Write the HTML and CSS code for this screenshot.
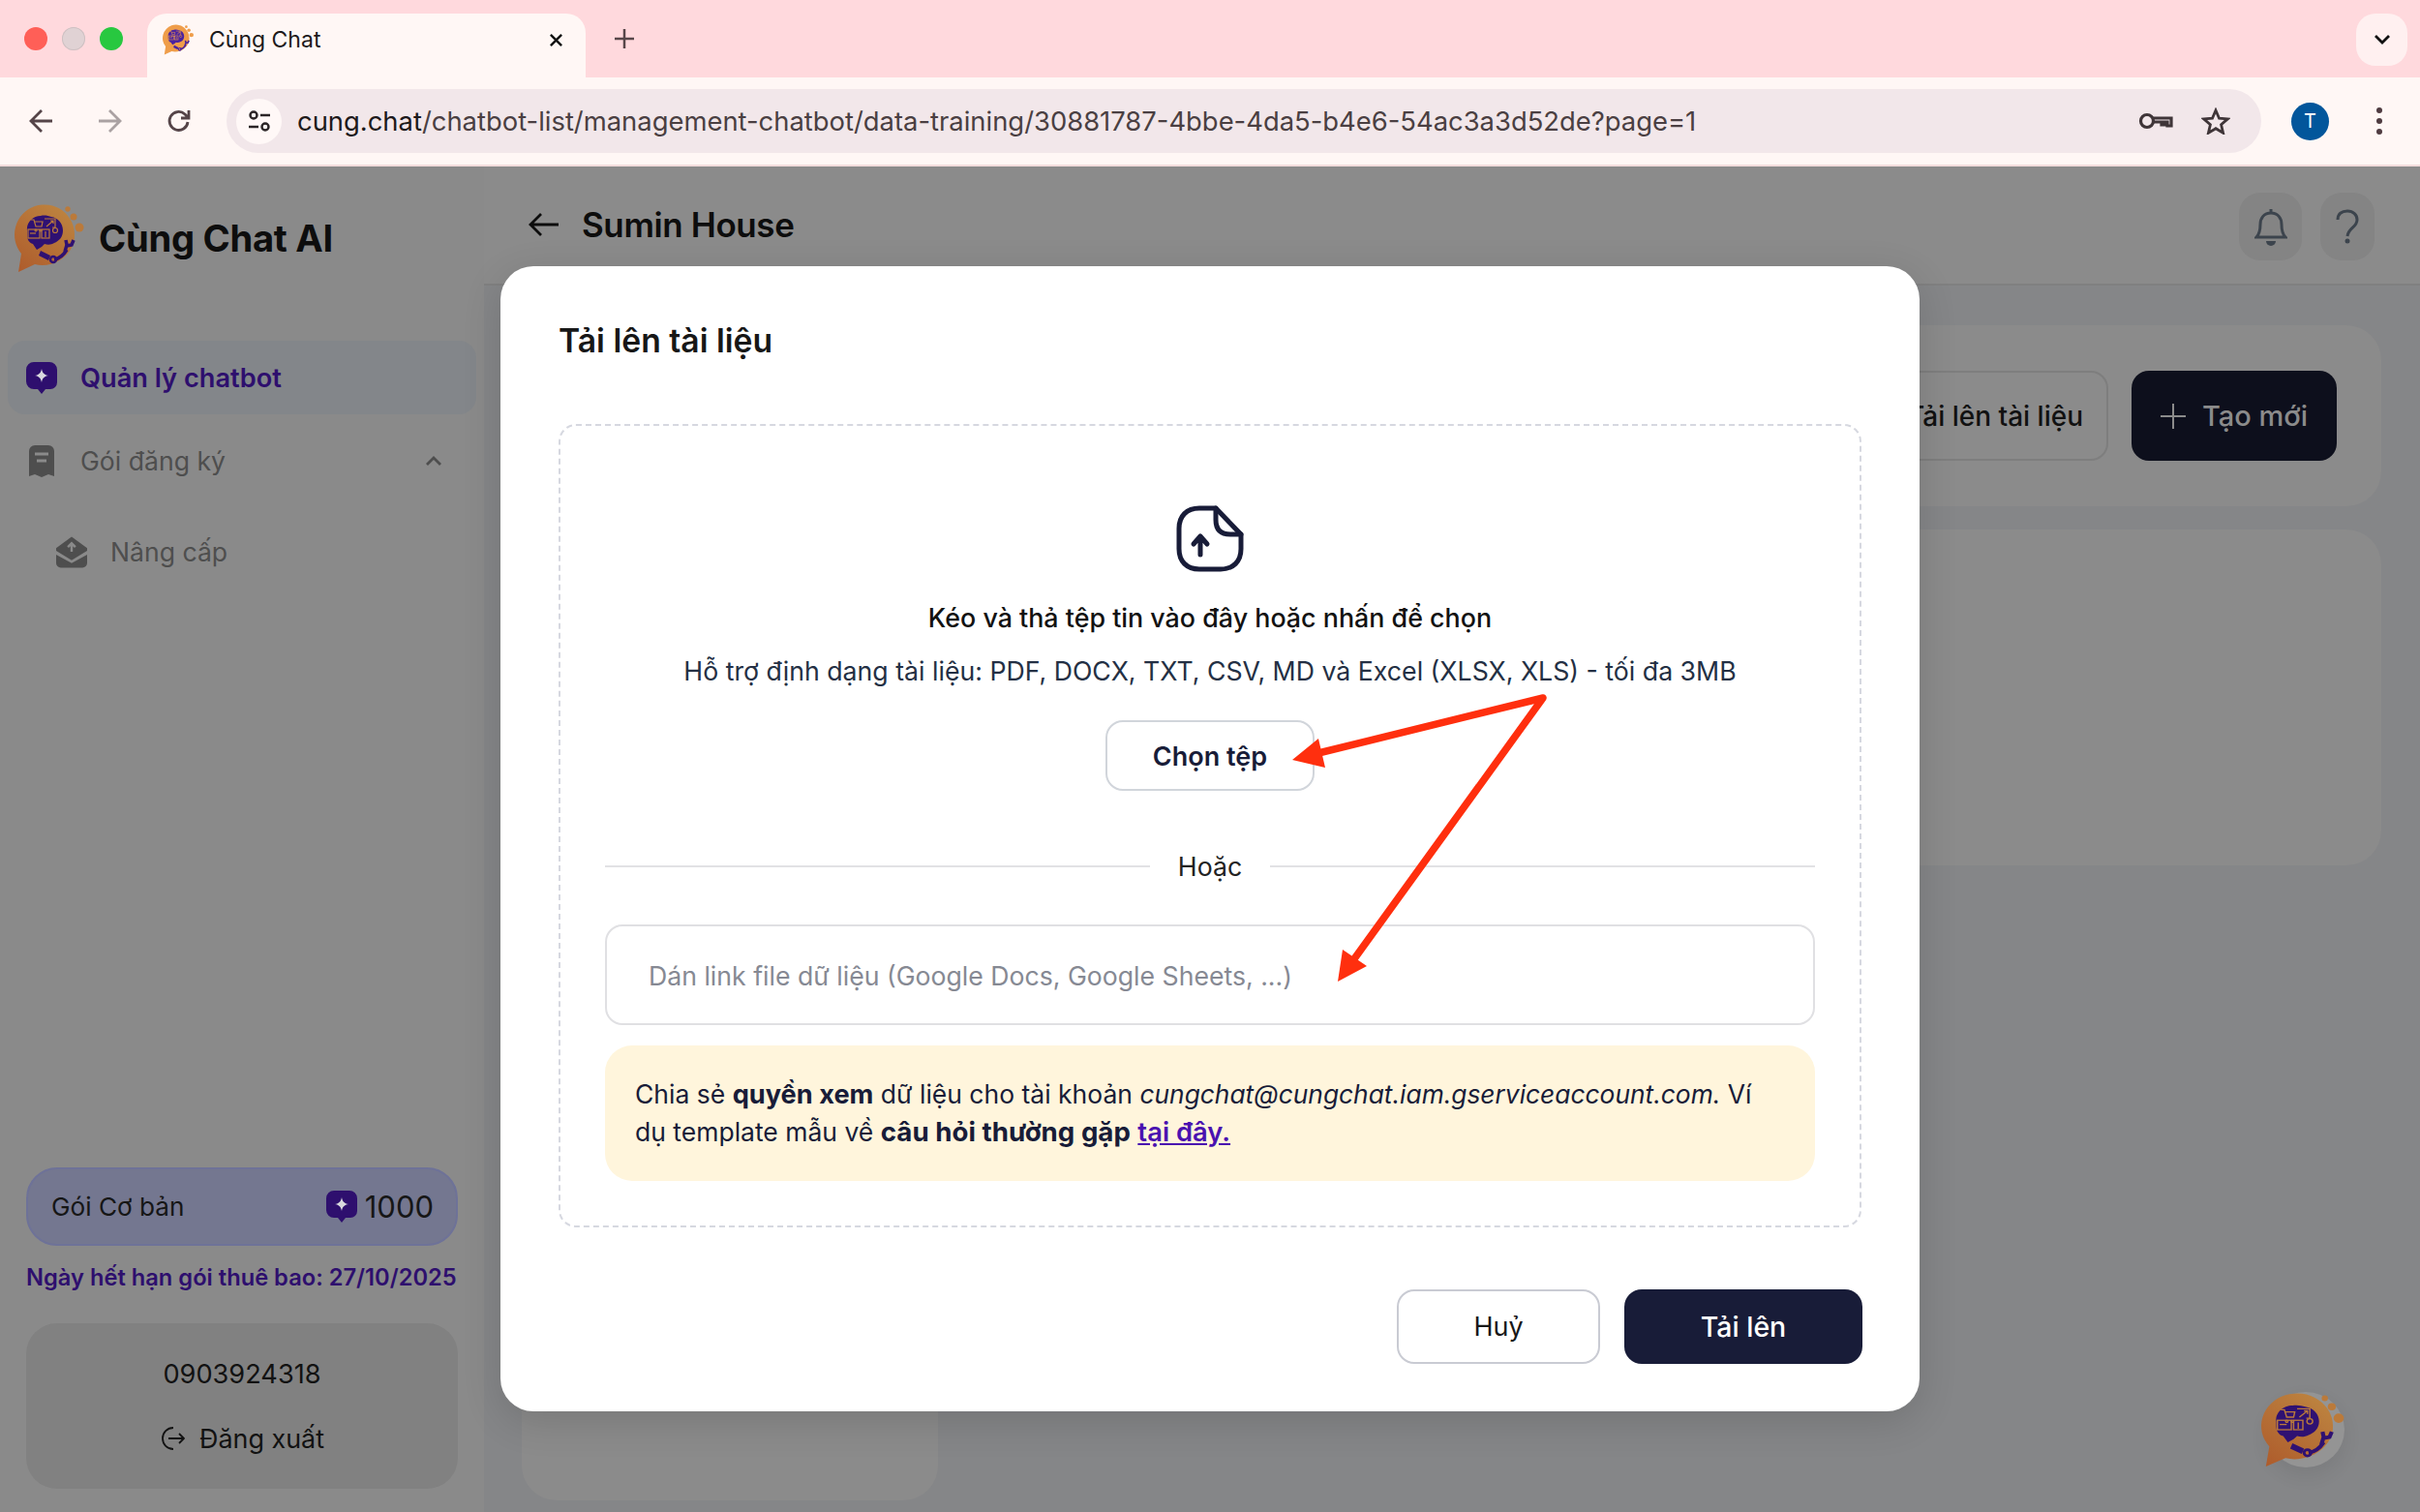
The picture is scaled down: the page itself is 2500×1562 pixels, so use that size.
FILE: index.html
```html
<!DOCTYPE html>
<html lang="vi">
<head>
    <meta charset="UTF-8">
    <meta name="viewport" content="width=device-width, initial-scale=1.0">
    <title>Cùng Chat</title>
    <link rel="stylesheet" href="styles.css">
</head>
<body>
    <svg class="defs" width="0" height="0">
        <defs>
            <linearGradient id="bubbleDim" x1="0.8" y1="0" x2="0.1" y2="1">
                <stop offset="0" stop-color="#bd8440"/>
                <stop offset="1" stop-color="#ae5c2c"/>
            </linearGradient>
            <symbol id="logoMark" viewBox="0 0 72 72">
                <path fill="currentColor" d="M13 28c-1-8 6-15 14-15 4-1 8 0 11 1 7 1 12 7 12 14 0 7-4 11-9 13-3 2-7 2-10 1l-3 3-5 3-4-6c-4-1-6-5-6-9z"/>
                <g fill="none" stroke="var(--mark-line)" stroke-width="1.2">
                    <path d="M17 17h3l2 7h6l1-5h-8M22 27a1 1 0 1 0 .1 0M27 27a1 1 0 1 0 .1 0"/>
                    <path d="M31 16h11v9h-3M33 24l7-6M37 18h3v3"/>
                    <circle cx="42" cy="28" r="2.5"/>
                    <rect x="14" y="27" width="12" height="9"/>
                    <path d="M16 31h6"/>
                    <rect x="28" y="27" width="8" height="9"/>
                    <path d="M32 29v6"/>
                </g>
                <path fill="currentColor" d="M27 49l10 5-2 5-10-5z"/>
                <g fill="none" stroke="currentColor">
                    <path stroke-width="3.500" d="M41 58c6-1 10-5 13-10"/>
                    <path stroke-width="3.500" d="M52 50l2-7-1-5M54 44l5-1 2-5"/>
                    <circle cx="40" cy="58" r="3" stroke-width="2.500"/>
                </g>
            </symbol>
            <symbol id="sparkChat" viewBox="0 0 32 33">
                <path fill="currentColor" d="M8 0h16a8 8 0 0 1 8 8v13a7 7 0 0 1-7 7h-5l-4 5-4-5H8a8 8 0 0 1-8-8V8a8 8 0 0 1 8-8z"/>
                <path fill="#d9d9de" d="M16 7c.8 4.300 2.700 6.200 7 7-4.300.8-6.200 2.700-7 7-.8-4.300-2.700-6.200-7-7 4.300-.8 6.200-2.700 7-7z"/>
            </symbol>
        </defs>
    </svg>

    <div class="chrome">
        <div class="tabstrip">
            <div class="lights">
                <span class="light red"></span>
                <span class="light grey"></span>
                <span class="light green"></span>
            </div>
            <div class="tab">
                <svg class="favicon" viewBox="0 0 72 72">
                    <path fill="#ef9d4a" d="M62 33a31 31 0 1 0-55 19l-3 19 17-8c17 5 41-8 41-30z"/>
                    <circle cx="55" cy="6" r="3" fill="#ef9d4a"/><circle cx="61" cy="14" r="4" fill="#ef9d4a"/><circle cx="67" cy="25" r="5" fill="#ef9d4a"/>
                    <use href="#logoMark" class="mark-bright" width="72" height="72"/>
                </svg>
                <span class="tab-title">Cùng Chat</span>
                <svg class="tab-close" viewBox="0 0 16 16"><path d="M2 2l12 12M14 2L2 14"/></svg>
            </div>
            <svg class="new-tab" viewBox="0 0 20 20"><path d="M10 0v20M0 10h20"/></svg>
            <div class="tab-search">
                <svg viewBox="0 0 16 10"><path d="M1 1l7 7 7-7"/></svg>
            </div>
        </div>
        <div class="toolbar">
            <div class="nav-icons">
                <svg viewBox="0 0 26 26"><path d="M24 13H3M13 2L2 13l11 11"/></svg>
                <svg class="off" viewBox="0 0 26 26"><path d="M2 13h21M13 2l11 11-11 11"/></svg>
                <svg viewBox="0 0 26 26"><path d="M22 14a9.500 9.500 0 1 1-3-8l3 3M23 2v8h-8"/></svg>
            </div>
            <div class="omnibox">
                <span class="site-info">
                    <svg viewBox="0 0 24 24">
                        <circle cx="6" cy="6" r="3.500"/><path d="M13 6h10M1 18h10"/><circle cx="18" cy="18" r="3.500"/>
                    </svg>
                </span>
                <span class="url"><b>cung.chat</b>/chatbot-list/management-chatbot/data-training/30881787-4bbe-4da5-b4e6-54ac3a3d52de?page=1</span>
                <svg class="key" viewBox="0 0 36 20">
                    <circle cx="9" cy="10" r="6.500"/><path d="M15 7h19v8h-4v-4h-3v3h-3v-3h-9"/>
                </svg>
                <svg class="star" viewBox="0 0 30 28">
                    <path d="M15 3l3.500 8.200 8.800.7-6.700 5.800 2 8.600-7.600-4.600-7.600 4.600 2-8.600-6.700-5.800 8.800-.7z"/>
                </svg>
            </div>
            <span class="avatar">T</span>
            <span class="kebab"><i></i><i></i><i></i></span>
        </div>
    </div>

    <div class="app">
        <aside class="sidebar">
            <div class="brand">
                <svg class="brand-logo" viewBox="0 0 72 72">
                    <path fill="url(#bubbleDim)" d="M62 33a31 31 0 1 0-55 19l-3 19 17-8c17 5 41-8 41-30z"/>
                    <circle cx="55" cy="6" r="2.700" fill="#bb7a3a"/><circle cx="61" cy="14" r="3.500" fill="#bb7a3a"/><circle cx="67" cy="25" r="4.500" fill="#bb7a3a"/>
                    <use href="#logoMark" class="mark-dim" width="72" height="72"/>
                </svg>
                <span class="brand-name">Cùng Chat AI</span>
            </div>
            <nav class="menu">
                <a class="menu-item active">
                    <svg class="menu-icon"><use href="#sparkChat"/></svg>
                    Quản lý chatbot
                </a>
                <a class="menu-item">
                    <svg class="menu-icon" viewBox="0 0 32 33">
                        <path fill="currentColor" d="M9 0h14a6 6 0 0 1 6 6v26l-6-2-7 3-7-3-6 2V6a6 6 0 0 1 6-6z"/>
                        <path stroke="#8a8a8a" stroke-width="3" d="M9 9h14M11 16h10"/>
                    </svg>
                    Gói đăng ký
                    <svg class="chevron" viewBox="0 0 16 10"><path d="M1 9l7-7 7 7"/></svg>
                </a>
                <a class="menu-item sub">
                    <svg class="menu-icon" viewBox="0 0 33 33">
                        <path fill="currentColor" d="M16.500 0L33 12v3L16.500 25 0 15v-3z"/>
                        <path fill="currentColor" d="M0 19l16.500 9L33 19v9a5 5 0 0 1-5 5H5a5 5 0 0 1-5-5z"/>
                        <path fill="none" stroke="#8a8a8a" stroke-width="2.500" d="M16.500 16V7M12.500 11l4-4 4 4"/>
                    </svg>
                    Nâng cấp
                </a>
            </nav>
            <div class="plan">
                <span>Gói Cơ bản</span>
                <span class="plan-credit">
                    <svg class="credit-icon"><use href="#sparkChat"/></svg>
                    1000
                </span>
            </div>
            <p class="expiry">Ngày hết hạn gói thuê bao: 27/10/2025</p>
            <div class="user-box">
                <span class="phone">0903924318</span>
                <span class="logout">
                    <svg viewBox="0 0 26 26"><path d="M14 2a11 11 0 1 0 0 22M9 13h16M20 8l5 5-5 5"/></svg>
                    Đăng xuất
                </span>
            </div>
        </aside>

        <main class="main">
            <header class="topbar">
                <svg class="back" viewBox="0 0 32 26"><path d="M31 13H2M13 2L2 13l11 11"/></svg>
                <h1>Sumin House</h1>
                <span class="top-btn bell">
                    <svg viewBox="0 0 34 40"><path d="M2 31c3-3 4-6 4-13 0-7 4-12 11-12s11 5 11 12c0 7 1 10 4 13zM17 6V2"/><path class="solid" d="M12 35h10a5 5 0 0 1-10 0z"/></svg>
                </span>
                <span class="top-btn help">
                    <svg viewBox="0 0 24 36"><path d="M2 11C2 5 6 2 12 2s10 4 10 9c0 8-9 8-10 17"/><circle class="solid" cx="12" cy="33" r="2.500"/></svg>
                </span>
            </header>
            <div class="content">
                <section class="card actions">
                    <button class="btn-outline">Tải lên tài liệu</button>
                    <button class="btn-dark">
                        <svg viewBox="0 0 26 26"><path d="M13 0v26M0 13h26"/></svg>
                        Tạo mới
                    </button>
                </section>
                <section class="card list"></section>
                <section class="card small"></section>
            </div>
        </main>

        <div class="float-logo">
            <svg viewBox="0 0 72 72" preserveAspectRatio="none">
                <path fill="url(#bubbleDim)" d="M62 33a31 31 0 1 0-55 19l-3 19 17-8c17 5 41-8 41-30z"/>
                <circle cx="55" cy="6" r="2.700" fill="#bb7a3a"/><circle cx="61" cy="14" r="3.500" fill="#bb7a3a"/><circle cx="67" cy="25" r="4.500" fill="#bb7a3a"/>
                <use href="#logoMark" class="mark-dim" width="72" height="72"/>
            </svg>
        </div>

        <div class="backdrop">
            <div class="modal">
                <h2>Tải lên tài liệu</h2>
                <div class="dropzone">
                    <svg class="file-icon" viewBox="0 0 70 69">
                        <path d="M41 3H24C11 3 3 11 3 24v21c0 13 8 21 21 21h22c13 0 21-8 21-21V30L41 3z"/>
                        <path d="M41 3v12c0 10 5 15 15 15h11"/>
                        <path d="M25 51V33M18 40l7-8 7 8"/>
                    </svg>
                    <p class="drop-title">Kéo và thả tệp tin vào đây hoặc nhấn để chọn</p>
                    <p class="drop-hint">Hỗ trợ định dạng tài liệu: PDF, DOCX, TXT, CSV, MD và Excel (XLSX, XLS) - tối đa 3MB</p>
                    <button class="choose">Chọn tệp</button>
                    <div class="divider"><span>Hoặc</span></div>
                    <input class="link-input" type="text" placeholder="Dán link file dữ liệu (Google Docs, Google Sheets, ...)">
                    <div class="note">
                        Chia sẻ <b>quyền xem</b> dữ liệu cho tài khoản <i>cungchat@cungchat.iam.gserviceaccount.com.</i> Ví<br>dụ template mẫu về <b class="faq">câu hỏi thường gặp</b> <a href="#">tại đây.</a>
                    </div>
                </div>
                <div class="modal-footer">
                    <button class="cancel">Huỷ</button>
                    <button class="submit">Tải lên</button>
                </div>
            </div>
        </div>
    </div>

    <!-- mũi tên chú thích vẽ đè lên ảnh -->
    <svg class="annotations" viewBox="0 0 2500 1562">
        <path class="arrow-line" d="M1362 778L1594 721 1398 992"/>
        <path class="arrow-head" d="M1335 785l27-22 7 30zM1382 1014l5-33 25 17z"/>
    </svg>
</body>
</html>
```

FILE: styles.css
```css
* {
    box-sizing: border-box;
}

body {
    margin: 0;
    width: 2500px;
    height: 1562px;
    overflow: hidden;
    position: relative;
    font-family: Inter, "Noto Sans", sans-serif;
    color: #111;
    background-color: #8a8a8a;
}

.defs {
    position: absolute;
}

.mark-dim {
    color: #2f1172;
    --mark-line: #b9793c;
}

.mark-bright {
    color: #4a22a0;
    --mark-line: #ef9d4a;
}

/* browser */
.chrome {
    height: 172px;
    background-color: #fff7f5;
    border-bottom: 2px solid #f3dcdc;
}

.tabstrip {
    height: 80px;
    background-color: #ffd9dd;
    display: flex;
    align-items: flex-start;
    position: relative;
}

.lights {
    display: flex;
    gap: 15px;
    padding: 28px 0 0 25px;
    width: 152px;
}

.light {
    width: 24px;
    height: 24px;
    border-radius: 50%;
}

.red { background-color: #ff5f57; }
.grey { background-color: #e0d2d4; box-shadow: inset 0 0 0 1px #cfc0c2; }
.green { background-color: #28c840; }

.tab {
    width: 453px;
    height: 66px;
    margin-top: 14px;
    padding: 0 23px 12px 16px;
    background-color: #fff7f5;
    border-radius: 20px 20px 0 0;
    display: flex;
    align-items: center;
}

.favicon {
    width: 32px;
    height: 32px;
}

.tab-title {
    font-size: 23px;
    margin-left: 16px;
    flex: 1;
    color: #1d1a1b;
}

.tab-close {
    width: 15px;
    height: 15px;
    fill: none;
    stroke: #111;
    stroke-width: 2.600;
}

.new-tab {
    width: 20px;
    height: 20px;
    margin: 30px 0 0 30px;
    fill: none;
    stroke: #574649;
    stroke-width: 2.500;
}

.tab-search {
    position: absolute;
    left: 2434px;
    top: 14px;
    width: 53px;
    height: 54px;
    border-radius: 20px;
    background-color: #fff0f0;
    display: flex;
    align-items: center;
    justify-content: center;
}

.tab-search svg {
    width: 16px;
    height: 10px;
    fill: none;
    stroke: #111;
    stroke-width: 2.800;
}

.toolbar {
    height: 90px;
    display: flex;
    align-items: center;
    padding-bottom: 0;
    border-radius: 20px 20px 0 0;
}

.nav-icons {
    display: flex;
    gap: 44px;
    padding-left: 30px;
    width: 234px;
}

.nav-icons svg {
    width: 26px;
    height: 26px;
    fill: none;
    stroke: #554448;
    stroke-width: 2.800;
}

.nav-icons svg:last-child {
    margin-left: 2px;
}

.nav-icons .off {
    stroke: #aaa1a2;
}

.omnibox {
    width: 2102px;
    height: 66px;
    border-radius: 33px;
    background-color: #f2e7ea;
    display: flex;
    align-items: center;
    padding-left: 10px;
}

.site-info {
    width: 47px;
    height: 47px;
    border-radius: 50%;
    background-color: #fff8f7;
    display: flex;
    align-items: center;
    justify-content: center;
}

.site-info svg {
    width: 24px;
    height: 24px;
    fill: none;
    stroke: #2a2426;
    stroke-width: 2.400;
}

.url {
    font-size: 27.4px;
    margin-left: 16px;
    color: #4a3f42;
    white-space: nowrap;
    flex: 1;
}

.url b {
    font-weight: 400;
    color: #1d1a1b;
}

.key {
    width: 36px;
    height: 20px;
    margin-right: 2px;
    fill: none;
    stroke: #3f3538;
    stroke-width: 3.200;
}

.star {
    width: 30px;
    height: 28px;
    margin: 0 32px 0 27px;
    fill: none;
    stroke: #3f3538;
    stroke-width: 2.800;
}

.avatar {
    width: 39px;
    height: 39px;
    margin-left: 31px;
    border-radius: 50%;
    background-color: #02569b;
    color: #fff;
    font-size: 20px;
    display: flex;
    align-items: center;
    justify-content: center;
}

.kebab {
    margin-left: 49px;
    display: flex;
    flex-direction: column;
    gap: 5px;
}

.kebab i {
    width: 6px;
    height: 6px;
    border-radius: 50%;
    background-color: #4f3b40;
}

/* page */
.app {
    height: 1390px;
    display: flex;
    position: relative;
}

.sidebar {
    width: 500px;
    background-color: #8a8a8a;
    display: flex;
    flex-direction: column;
    padding: 38px 27px 24px;
}

.brand {
    display: flex;
    align-items: center;
    margin-left: -12px;
}

.brand-logo {
    width: 72px;
    height: 72px;
}

.brand-name {
    font-size: 38.2px;
    font-weight: 700;
    margin-left: 15px;
    letter-spacing: -0.3px;
    color: #0d0d0d;
}

.menu {
    margin: 70px -19px 0;
    display: flex;
    flex-direction: column;
}

.menu-item {
    height: 76px;
    margin-bottom: 18px;
    padding-left: 19px;
    border-radius: 18px;
    display: flex;
    align-items: center;
    font-size: 26.6px;
    color: #4e4e4e;
}

.menu-item.active {
    margin-bottom: 10px;
    background-color: #83868a;
    color: #2e0f6e;
    font-size: 27.2px;
    font-weight: 600;
}

.menu-item.sub {
    padding-left: 50px;
}

.menu-icon {
    width: 32px;
    height: 33px;
    margin-right: 24px;
    flex: none;
}

.chevron {
    width: 16px;
    height: 10px;
    margin-left: 207px;
    fill: none;
    stroke: #4e4e4e;
    stroke-width: 2.800;
}

.plan {
    margin-top: auto;
    height: 81px;
    padding: 0 23px 0 24px;
    border: 2px solid #6e7298;
    border-radius: 32px;
    background-color: #747790;
    display: flex;
    align-items: center;
    justify-content: space-between;
    font-size: 26.2px;
    color: #161616;
}

.plan-credit {
    display: flex;
    align-items: center;
    font-size: 31px;
}

.credit-icon {
    width: 32px;
    height: 33px;
    margin-right: 8px;
    color: #2e0f6e;
}

.expiry {
    margin: 20px 0 0;
    font-size: 23.7px;
    font-weight: 600;
    line-height: 26px;
    white-space: nowrap;
    color: #2e0f6e;
}

.user-box {
    margin-top: 34px;
    height: 171px;
    border-radius: 32px;
    background-color: #818181;
    display: flex;
    flex-direction: column;
    align-items: center;
    gap: 32px;
    padding-top: 36px;
    font-size: 26.9px;
    color: #121212;
}

.user-box span {
    line-height: 34px;
}

.phone {
    font-size: 27.2px;
}

.logout {
    display: flex;
    align-items: center;
}

.logout svg {
    width: 26px;
    height: 26px;
    margin-right: 15px;
    fill: none;
    stroke: #121212;
    stroke-width: 1.800;
}

.main {
    flex: 1;
    background-color: #858688;
    display: flex;
    flex-direction: column;
}

.topbar {
    height: 123px;
    background-color: #8b8b8b;
    border-bottom: 2px solid #808080;
    display: flex;
    align-items: center;
    padding: 0 47px 0 46px;
}

.back {
    width: 32px;
    height: 26px;
    margin: -2px 23px 0 0;
    fill: none;
    stroke: #0d0d0d;
    stroke-width: 2.800;
}

.topbar h1 {
    margin: -2px 0 0;
    flex: 1;
    font-size: 35px;
    font-weight: 600;
    letter-spacing: -0.4px;
    color: #0d0d0d;
}

.top-btn {
    height: 70px;
    margin-top: 3px;
    border-radius: 22px;
    background-color: #848484;
    display: flex;
    align-items: center;
    justify-content: center;
}

.top-btn svg {
    fill: none;
    stroke: #3c444d;
    stroke-width: 3;
}

.top-btn .solid {
    fill: #3c444d;
    stroke: none;
}

.bell {
    width: 65px;
    margin-right: 19px;
}

.bell svg {
    width: 34px;
    height: 40px;
}

.help {
    width: 56px;
}

.help svg {
    width: 24px;
    height: 36px;
}

.content {
    flex: 1;
    display: flex;
    flex-direction: column;
    gap: 24px;
    padding: 41px 40px 12px 39px;
}

.card {
    background-color: #8b8b8b;
    border-radius: 36px;
}

.actions {
    height: 187px;
    display: flex;
    align-items: center;
    justify-content: flex-end;
    gap: 24px;
    padding-right: 46px;
}

.actions button {
    height: 93px;
    border-radius: 18px;
    font-family: inherit;
    font-size: 29px;
    font-weight: 500;
}

.actions .btn-outline {
    padding: 0 24px 0 60px;
    background: none;
    border: 2px solid #7e7e7e;
    font-size: 28px;
    color: #111;
}

.btn-dark {
    width: 212px;
    border: none;
    background-color: #0d0f1c;
    color: #8b8b8b;
    display: flex;
    align-items: center;
    justify-content: center;
    gap: 17px;
}

.btn-dark svg {
    width: 26px;
    height: 26px;
    fill: none;
    stroke: #8b8b8b;
    stroke-width: 2;
}

.list {
    height: 347px;
}

.small {
    flex: 1;
    width: 430px;
}

.float-logo {
    position: absolute;
    left: 2336px;
    top: 1266px;
    width: 86px;
    height: 80px;
}

.float-logo::before {
    content: "";
    position: absolute;
    left: 6px;
    top: 0;
    width: 80px;
    height: 78px;
    border-radius: 50%;
    background-color: #949494;
    box-shadow: 0 8px 20px rgba(0, 0, 0, 0.08);
}

.float-logo svg {
    position: relative;
    display: block;
    width: 86px;
    height: 78px;
}

/* modal */
.backdrop {
    position: absolute;
    top: 0;
    left: 0;
    width: 100%;
    height: 100%;
    display: flex;
    justify-content: center;
    align-items: flex-start;
    padding-top: 103px;
}

.modal {
    width: 1466px;
    height: 1183px;
    padding: 53px 60px 49px;
    background-color: #fff;
    border-radius: 34px;
    box-shadow: 0 10px 40px rgba(0, 0, 0, 0.14);
}

.modal h2 {
    margin: 0;
    font-size: 33.7px;
    line-height: 48px;
    font-weight: 600;
    color: #171717;
}

.dropzone {
    margin-top: 62px;
    height: 830px;
    border: 2px dashed #d6d8e0;
    border-radius: 18px;
    padding: 82px 46px 46px;
    display: flex;
    flex-direction: column;
    align-items: center;
}

.file-icon {
    width: 70px;
    height: 69px;
    flex: none;
    fill: none;
    stroke: #181c38;
    stroke-width: 5;
    stroke-linejoin: round;
    stroke-linecap: round;
}

.drop-title,
.drop-hint {
    margin: 0;
    line-height: 40px;
}

.drop-title {
    margin-top: 27px;
    font-size: 26.85px;
    font-weight: 500;
    color: #121212;
}

.drop-hint {
    margin-top: 15px;
    font-size: 26.7px;
    color: #243044;
}

.choose {
    margin-top: 31px;
    width: 216px;
    height: 73px;
    flex: none;
    padding-top: 2px;
    border: 2px solid #d1d5db;
    border-radius: 18px;
    background-color: #fff;
    font-family: inherit;
    font-size: 27px;
    font-weight: 600;
    color: #181c38;
}

.divider {
    margin-top: 58px;
    width: 100%;
    height: 40px;
    flex: none;
    display: flex;
    align-items: center;
    gap: 29px;
    font-size: 26.7px;
    color: #222;
}

.divider::before,
.divider::after {
    content: "";
    flex: 1;
    height: 2px;
    background-color: #e2e2e4;
}

.link-input {
    margin-top: 40px;
    width: 100%;
    height: 104px;
    flex: none;
    padding: 2px 43px 0;
    border: 2px solid #e0e0e3;
    border-radius: 18px;
    font-family: inherit;
    font-size: 26.65px;
    outline: none;
}

.link-input::placeholder {
    color: #868993;
}

.note {
    margin-top: 21px;
    width: 100%;
    height: 140px;
    flex: none;
    padding: 31px;
    border-radius: 28px;
    background-color: #fff5dc;
    font-size: 26.5px;
    line-height: 39px;
    color: #181c38;
}

.note a {
    color: #4a12b0;
    font-size: 27.4px;
    font-weight: 600;
    text-decoration: underline;
}

.note b {
    font-size: 27.2px;
    font-weight: 700;
}

.note .faq {
    font-size: 27.7px;
}

.note i {
    font-size: 26.35px;
}

.modal-footer {
    margin: 64px -1px 0 0;
    display: flex;
    justify-content: flex-end;
    gap: 25px;
}

.modal-footer button {
    height: 77px;
    border-radius: 18px;
    font-family: inherit;
    font-size: 27px;
}

.cancel {
    width: 210px;
    border: 2px solid #c9cbd3;
    background-color: #fff;
    color: #181818;
}

.modal-footer .submit {
    width: 246px;
    border: none;
    background-color: #181c38;
    color: #fff;
    font-size: 28.5px;
    font-weight: 500;
}

.annotations {
    position: absolute;
    top: 0;
    left: 0;
    width: 2500px;
    height: 1562px;
    pointer-events: none;
}

.arrow-line {
    fill: none;
    stroke: #ff2f0e;
    stroke-width: 7.500;
    stroke-linejoin: round;
}

.arrow-head {
    fill: #ff2f0e;
}
```
